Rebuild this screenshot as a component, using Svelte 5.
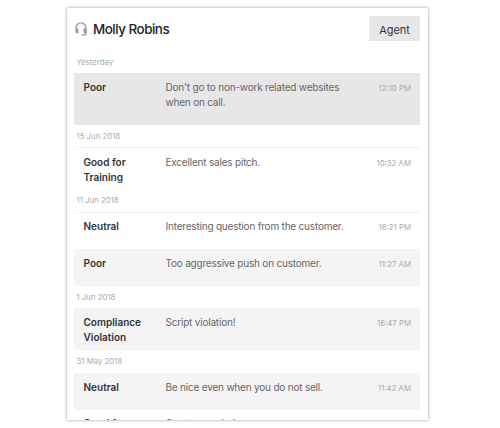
<script lang="ts">
  type Note = { rating: string; text: string; time: string; tone: string };
  type Group = { date: string; notes: Note[] };

  const name = 'Molly Robins';

  const groups: Group[] = [
    {
      date: 'Yesterday',
      notes: [
        { rating: 'Poor', text: "Don't go to non-work related websites when on call.", time: '12:10 PM', tone: 'selected' }
      ]
    },
    {
      date: '15 Jun 2018',
      notes: [{ rating: 'Good for Training', text: 'Excellent sales pitch.', time: '10:32 AM', tone: 'plain' }]
    },
    {
      date: '11 Jun 2018',
      notes: [
        { rating: 'Neutral', text: 'Interesting question from the customer.', time: '16:21 PM', tone: 'plain' },
        { rating: 'Poor', text: 'Too aggressive push on customer.', time: '11:27 AM', tone: 'shaded' }
      ]
    },
    {
      date: '1 Jun 2018',
      notes: [{ rating: 'Compliance Violation', text: 'Script violation!', time: '16:47 PM', tone: 'shaded' }]
    },
    {
      date: '31 May 2018',
      notes: [
        { rating: 'Neutral', text: 'Be nice even when you do not sell.', time: '11:42 AM', tone: 'shaded' },
        { rating: 'Good for', text: 'Great empathy!', time: '', tone: 'last' }
      ]
    }
  ];
</script>

<main>
  <div class="card">
    <header>
      <svg class="headset" viewBox="0 0 12 14" width="12" height="14">
        <path d="M1 8V5.8a5 5 0 0 1 10 0V11.6a1.2 1.2 0 0 1-1.2 1.2H6.5" />
        <rect x="0.6" y="6.6" width="2.9" height="4.6" rx="0.8" />
        <rect x="8.5" y="6.6" width="2.9" height="4.6" rx="0.8" />
      </svg>
      <h1>{name}</h1>
      <button>Agent</button>
    </header>

    {#each groups as group}
      <section>
        <h2>{group.date}</h2>
        {#each group.notes as note}
          <div class="note {note.tone}">
            <strong>{note.rating}</strong>
            <p>{note.text}</p>
            <time>{note.time}</time>
          </div>
        {/each}
      </section>
    {/each}
  </div>
</main>

<style>
  :global(body) {
    margin: 0;
    background: #fff;
  }

  main {
    box-sizing: border-box;
    height: 428px;
    padding: 8px 0 0 67px;
    background: #fff;
  }

  .card {
    box-sizing: border-box;
    width: 361px;
    height: 412px;
    padding: 8px 8px 0 7px;
    overflow: hidden;
    background: #fff;
    box-shadow: 0 0 3px rgba(0, 0, 0, 0.42);
    font-family: Inter, 'Liberation Sans', sans-serif;
    color: #333;
  }

  header {
    display: flex;
    align-items: center;
    height: 25px;
    margin-bottom: 9.8px;
  }

  .headset {
    margin: 0 6px 0 1px;
    fill: #999;
  }

  .headset path {
    fill: none;
    stroke: #999;
    stroke-width: 1.3;
  }

  h1 {
    flex: 1;
    margin: 0;
    font-size: 13.4px;
    font-weight: 500;
    letter-spacing: -0.48px;
    color: #222;
  }

  button {
    width: 51px;
    height: 25px;
    padding: 2px 0 0;
    border: 0;
    background: #e7e7e7;
    font: 11px Inter, sans-serif;
    letter-spacing: -0.1px;
    color: #333;
  }

  h2 {
    box-sizing: border-box;
    height: 22.5px;
    margin: 0;
    padding: 0 2.5px;
    font-size: 7.8px;
    font-weight: 400;
    line-height: 23px;
    color: #aaa;
  }

  .note {
    box-sizing: border-box;
    display: grid;
    grid-template-columns: 82px 190px 1fr;
    min-height: 37px;
    padding: 7px 9px 4.8px 9.5px;
    font-size: 10px;
    line-height: 15px;
  }

  .plain {
    border-top: 1px solid #f2f2f2;
    padding-top: 6.2px;
  }

  .shaded {
    background: #f4f4f4;
  }

  .selected {
    min-height: 51.6px;
    background: #e7e7e7;
  }

  .last {
    padding-top: 6.4px;
  }

  strong {
    width: 62px;
    font-weight: 600;
  }

  p {
    margin: 0;
    letter-spacing: -0.2px;
    color: #666;
  }

  time {
    font-size: 7.8px;
    line-height: 17px;
    text-align: right;
    white-space: nowrap;
    color: #aaa;
  }
</style>
